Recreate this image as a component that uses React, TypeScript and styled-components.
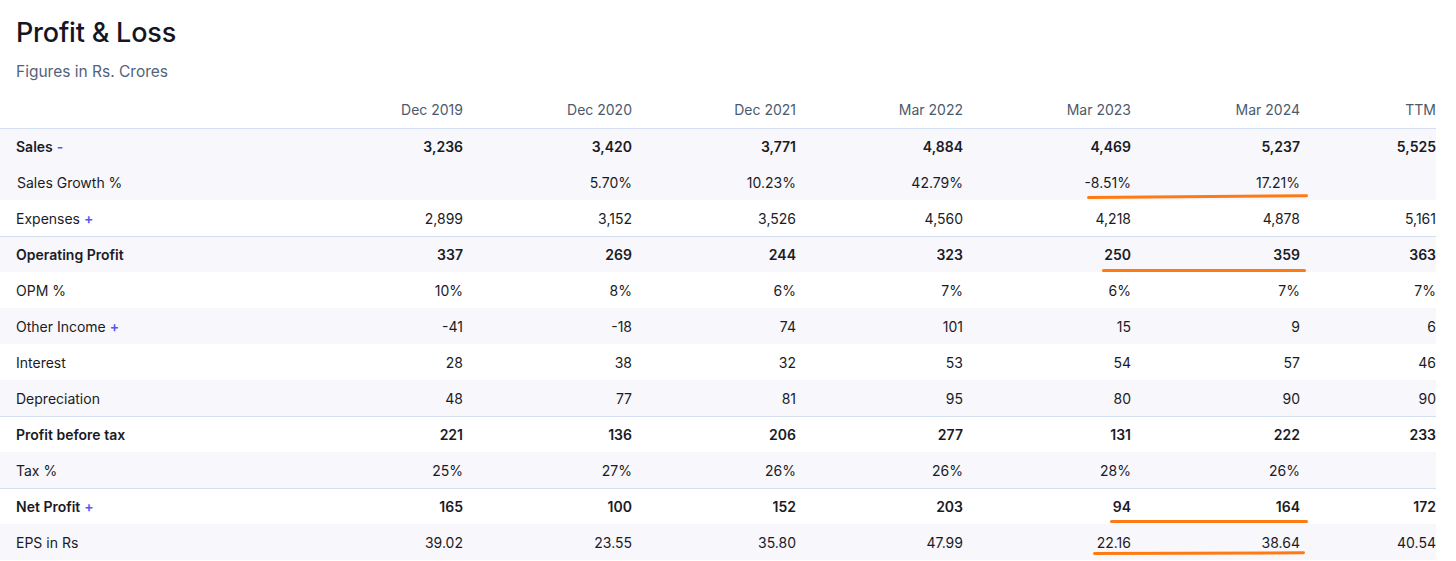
import React from 'react';
import styled, { createGlobalStyle } from 'styled-components';

const GlobalStyle = createGlobalStyle`
  html, body {
    margin: 0;
    padding: 0;
    background: #ffffff;
  }
  body {
    font-family: Inter, "Noto Sans", sans-serif;
    color: #1b1b26;
    -webkit-font-smoothing: antialiased;
  }
`;

const columns = '295px 168px 169px 164px 167px 168px 169px 136px';

const Page = styled.main`
  position: relative;
  width: 1456px;
  height: 561px;
  overflow: hidden;
`;

const Heading = styled.header`
  padding: 16px 16px 0;
`;

const Title = styled.h1`
  margin: 0;
  font-size: 27px;
  line-height: 33px;
  font-weight: 500;
  color: #161622;
  letter-spacing: -0.2px;
`;

const Subtitle = styled.p`
  margin: 11px 0 0;
  font-size: 15.5px;
  line-height: 24px;
  color: #53627a;
`;

const Table = styled.section`
  margin-top: 7px;
  padding-right: 20px;
`;

const HeadRow = styled.div`
  display: grid;
  grid-template-columns: ${columns};
  height: 37px;
  align-items: center;
  font-size: 14px;
  color: #4b5a6f;
`;

const HeadCell = styled.div`
  text-align: right;
`;

const Row = styled.div<{ $striped?: boolean; $bold?: boolean; $ruled?: boolean }>`
  display: grid;
  grid-template-columns: ${columns};
  height: 36px;
  box-sizing: border-box;
  align-items: center;
  font-size: 14px;
  font-weight: ${p => (p.$bold ? 600 : 400)};
  background: ${p => (p.$striped ? '#f7f7fc' : '#ffffff')};
  border-top: ${p => (p.$ruled ? '1.5px solid #d4e0f1' : 'none')};
`;

const Label = styled.div<{ $indent?: boolean }>`
  padding-left: ${p => (p.$indent ? 17 : 16)}px;
  white-space: nowrap;
`;

const Toggle = styled.span`
  color: #5558f2;
  font-weight: 600;
  margin-left: 4px;
`;

const Value = styled.div`
  text-align: right;
`;

const Mark = styled.div<{ $top: number; $left: number; $width: number; $tilt?: number }>`
  position: absolute;
  top: ${p => p.$top}px;
  left: ${p => p.$left}px;
  width: ${p => p.$width}px;
  height: 3px;
  border-radius: 2px;
  background: #ff7a12;
  transform: rotate(${p => p.$tilt ?? 0}deg);
  transform-origin: left center;
`;

const years = ['Dec 2019', 'Dec 2020', 'Dec 2021', 'Mar 2022', 'Mar 2023', 'Mar 2024', 'TTM'];

type Line = {
  label: string;
  values: string[];
  bold?: boolean;
  striped?: boolean;
  ruled?: boolean;
  toggle?: string;
  indent?: boolean;
};

const lines: Line[] = [
  { label: 'Sales', toggle: '-', bold: true, striped: true, ruled: true, values: ['3,236', '3,420', '3,771', '4,884', '4,469', '5,237', '5,525'] },
  { label: 'Sales Growth %', striped: true, indent: true, values: ['', '5.70%', '10.23%', '42.79%', '-8.51%', '17.21%', ''] },
  { label: 'Expenses', toggle: '+', values: ['2,899', '3,152', '3,526', '4,560', '4,218', '4,878', '5,161'] },
  { label: 'Operating Profit', bold: true, striped: true, ruled: true, values: ['337', '269', '244', '323', '250', '359', '363'] },
  { label: 'OPM %', values: ['10%', '8%', '6%', '7%', '6%', '7%', '7%'] },
  { label: 'Other Income', toggle: '+', striped: true, values: ['-41', '-18', '74', '101', '15', '9', '6'] },
  { label: 'Interest', values: ['28', '38', '32', '53', '54', '57', '46'] },
  { label: 'Depreciation', striped: true, values: ['48', '77', '81', '95', '80', '90', '90'] },
  { label: 'Profit before tax', bold: true, ruled: true, values: ['221', '136', '206', '277', '131', '222', '233'] },
  { label: 'Tax %', striped: true, values: ['25%', '27%', '26%', '26%', '28%', '26%', ''] },
  { label: 'Net Profit', toggle: '+', bold: true, ruled: true, values: ['165', '100', '152', '203', '94', '164', '172'] },
  { label: 'EPS in Rs', striped: true, values: ['39.02', '23.55', '35.80', '47.99', '22.16', '38.64', '40.54'] },
];

const App = () => {
  return (
    <Page>
      <GlobalStyle />
      <Heading>
        <Title>Profit &amp; Loss</Title>
        <Subtitle>Figures in Rs. Crores</Subtitle>
      </Heading>
      <Table>
        <HeadRow>
          <div />
          {years.map(y => (
            <HeadCell key={y}>{y}</HeadCell>
          ))}
        </HeadRow>
        {lines.map(line => (
          <Row key={line.label} $striped={line.striped} $bold={line.bold} $ruled={line.ruled}>
            <Label $indent={line.indent}>
              {line.label}
              {line.toggle && <Toggle>{line.toggle}</Toggle>}
            </Label>
            {line.values.map((v, i) => (
              <Value key={i}>{v}</Value>
            ))}
          </Row>
        ))}
      </Table>
      {/* hand-drawn highlights over the figures */}
      <Mark $top={196} $left={1087} $width={221} $tilt={-0.45} />
      <Mark $top={269} $left={1102} $width={204} />
      <Mark $top={520} $left={1110} $width={198} />
      <Mark $top={552} $left={1093} $width={212} $tilt={-0.2} />
    </Page>
  );
};

export default App;
